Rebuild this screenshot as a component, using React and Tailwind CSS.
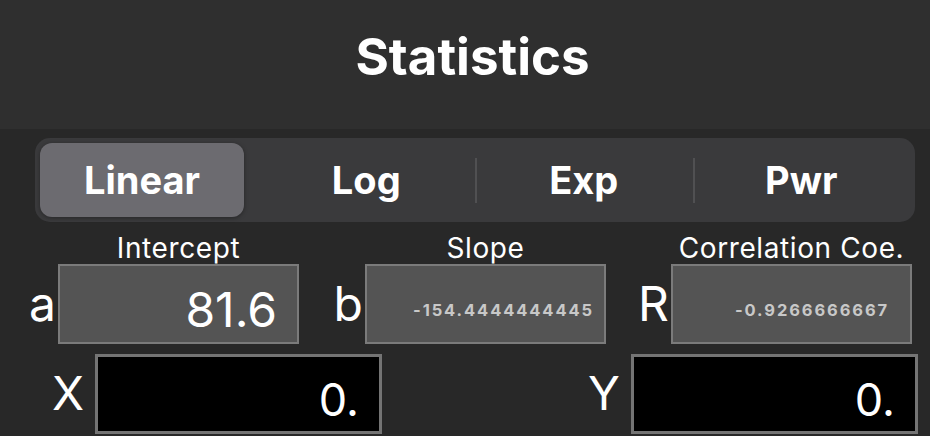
import React from "react";

const font = { fontFamily: "Inter, 'Liberation Sans', sans-serif" };

const modes = ["Linear", "Log", "Exp", "Pwr"];

function Segmented({ selected = 0 }) {
  return (
    <div className="ml-[35px] mr-[15px] mt-[9px] h-[84px] rounded-[15px] bg-[#3a3a3c] p-[5px] flex">
      {modes.map((m, i) => (
        <div key={m} className="relative flex-1 flex items-center">
          {i === selected ? (
            <div className="h-full w-[204px] rounded-[12px] bg-[#6c6b70] shadow-[0_1px_4px_rgba(0,0,0,0.35)] flex items-center justify-center text-white text-[38px] font-bold leading-[38px]">
              {m}
            </div>
          ) : (
            <div className="w-full text-center text-white text-[38px] font-bold leading-[38px]">{m}</div>
          )}
          {i > 1 && <div className="absolute left-0 top-[15px] h-[45px] w-[2px] bg-[#505052]" />}
        </div>
      ))}
    </div>
  );
}

function CoefBox({ letter, label, value, big, letterW, pr, gapLeft }) {
  return (
    <div className="flex items-end" style={{ marginLeft: gapLeft }}>
      <div
        className="h-[80px] flex items-center justify-end text-white text-[48px] leading-[48px] pr-[2px]"
        style={{ width: letterW }}
      >
        {letter}
      </div>
      <div className="flex flex-col items-center">
        <div className="text-[28px] leading-[28px] tracking-[0.6px] text-white mb-[2px] whitespace-nowrap">{label}</div>
        <div
          className="w-[241px] h-[80px] border-2 border-[#7b7b7b] bg-[#545454] flex items-center justify-end pt-[12px]"
          style={{ paddingRight: pr }}
        >
          {big ? (
            <span className="text-white text-[48px] leading-[48px]">{value}</span>
          ) : (
            <span className="text-[#c8c8c8] text-[16.5px] leading-[17px] font-bold tracking-[1.9px]">{value}</span>
          )}
        </div>
      </div>
    </div>
  );
}

function InputBox({ letter }) {
  return (
    <div className="flex items-center">
      <div className="w-[43px] text-white text-[47px] leading-[47px] pb-[4px]">{letter}</div>
      <div className="w-[287px] h-[80px] border-[3px] border-[#747474] bg-black flex items-center justify-end pr-[20px] pt-[11px]">
        <span className="text-white text-[45px] leading-[45px]">0.</span>
      </div>
    </div>
  );
}

export default function App() {
  return (
    <div className="w-[930px] h-[436px] overflow-hidden bg-[#282828]" style={font}>
      <div className="h-[129px] bg-[#2f2f2f] flex items-center justify-center pb-[16px] pl-[15px]">
        <h1 className="text-white text-[51px] font-bold leading-[51px]">Statistics</h1>
      </div>

      <Segmented selected={0} />

      <div className="mt-[12px] flex">
        <CoefBox letter="a" label="Intercept" value="81.6" big letterW={30} pr={20} gapLeft={28} />
        <CoefBox letter="b" label="Slope" value="-154.4444444445" letterW={29} pr={10} gapLeft={37} />
        <CoefBox letter="R" label="Correlation Coe." value="-0.9266666667" letterW={32} pr={21} gapLeft={33} />
      </div>

      <div className="mt-[10px] flex pl-[52px]">
        <InputBox letter="X" />
        <div className="ml-[206px]">
          <InputBox letter="Y" />
        </div>
      </div>
    </div>
  );
}
